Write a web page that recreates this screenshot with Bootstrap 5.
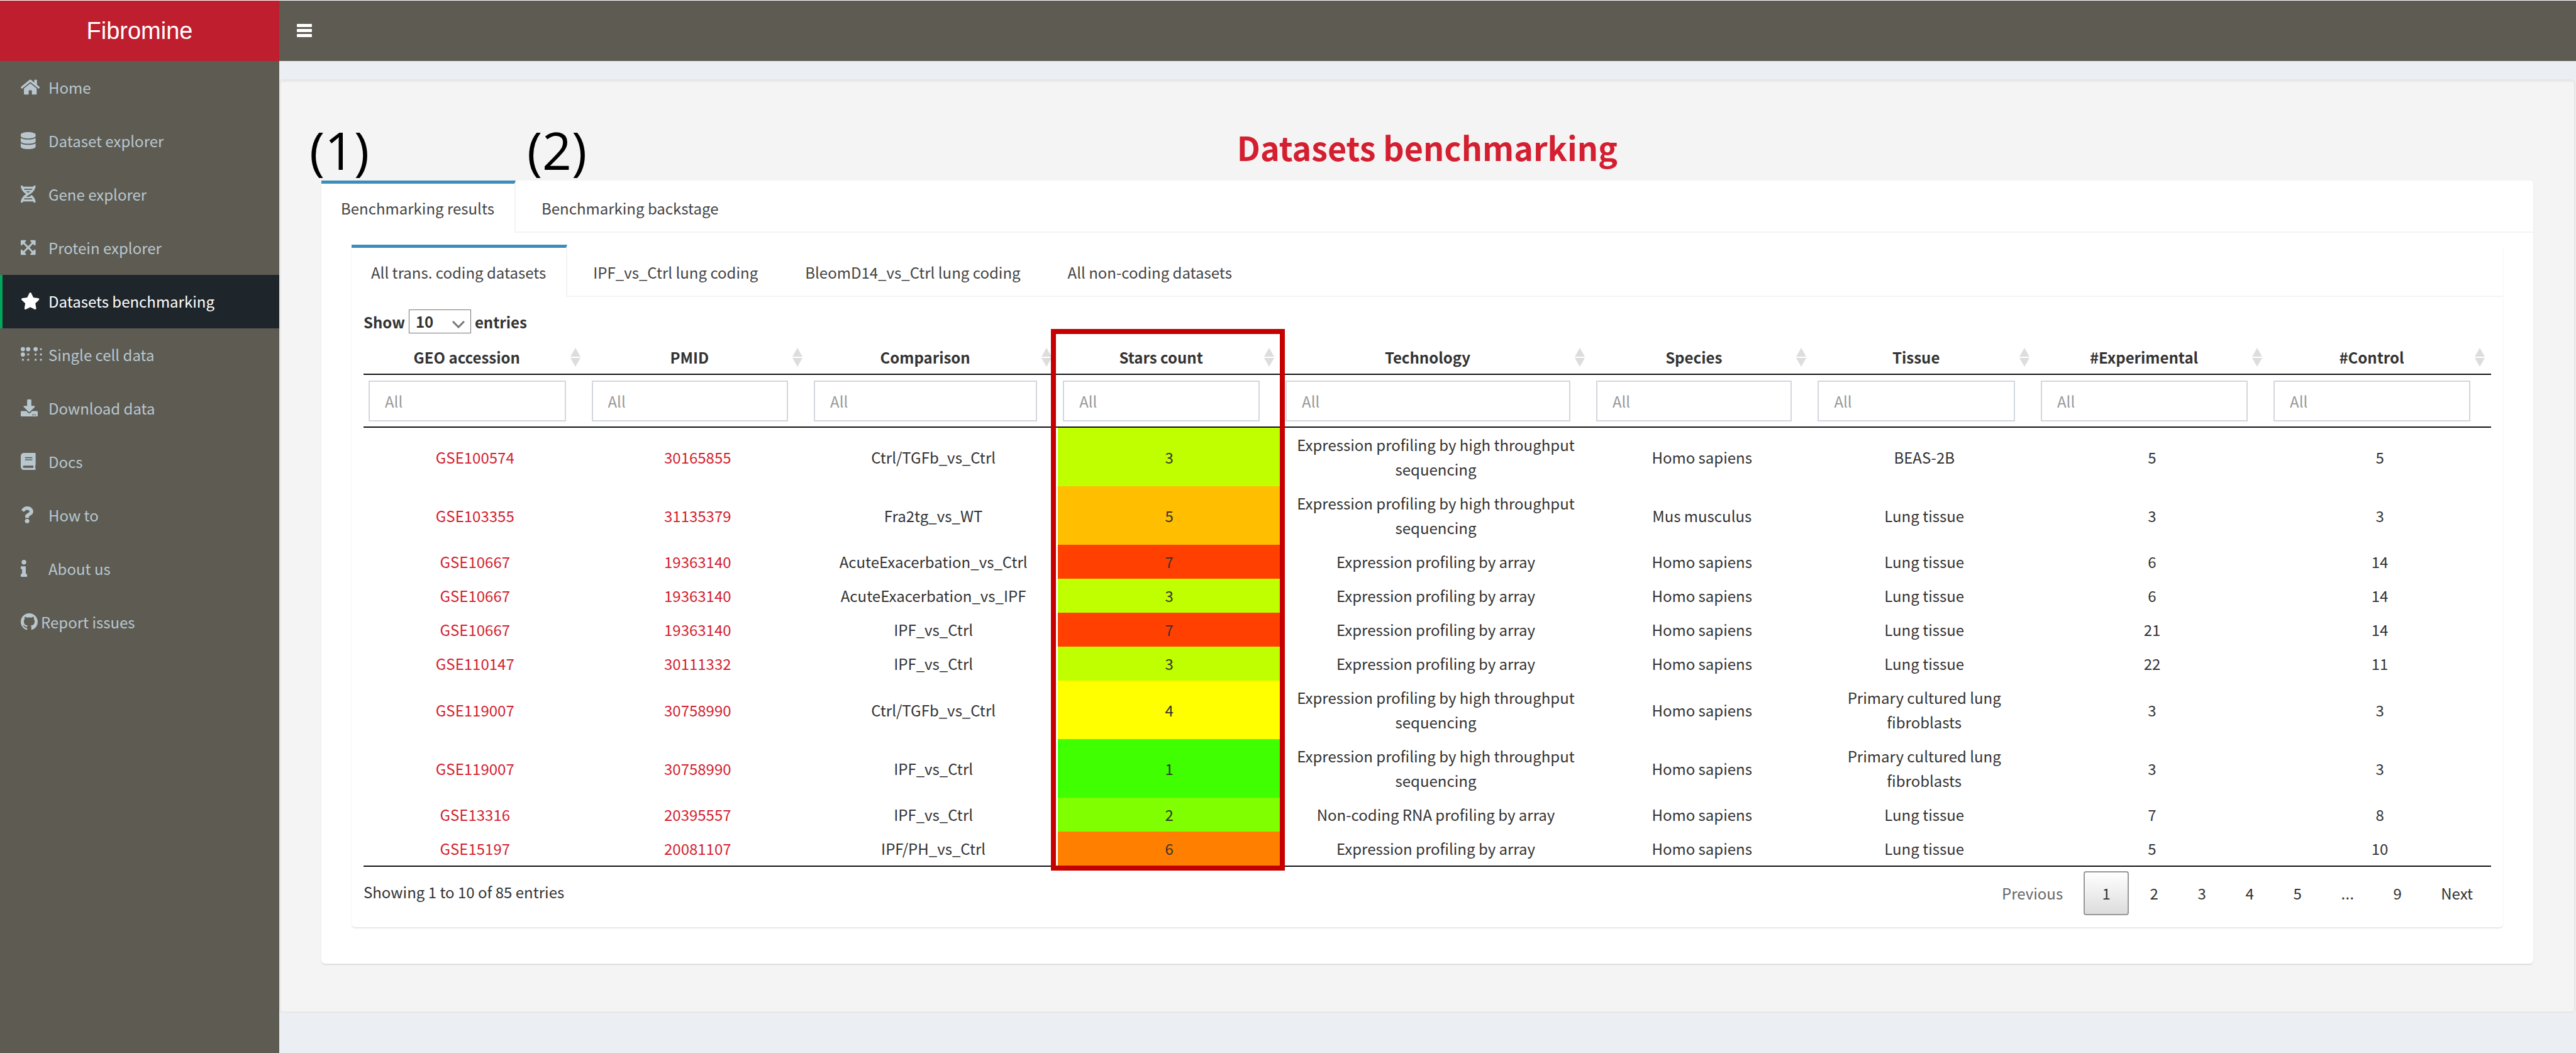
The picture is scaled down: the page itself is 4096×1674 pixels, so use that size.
<!DOCTYPE html>
<html lang="en">
<head>
<meta charset="utf-8">
<meta name="viewport" content="width=device-width, initial-scale=1">
<title>Fibromine - Datasets benchmarking</title>
<link href="https://cdn.jsdelivr.net/npm/bootstrap@5.3.0/dist/css/bootstrap.min.css" rel="stylesheet">
<style>
  body {
    font-family: "Noto Sans CJK SC", "Open Sans", sans-serif;
    font-size: 24px;
    line-height: 39px;
    color: #333;
    background: #ebeff4;
    border-top: 1px solid #fff;
  }
  a { text-decoration: none; }

  /* header */
  .brand-logo {
    width: 444px; height: 96px;
    background: #be1e2d; color: #fff;
    font: 38px/96px "Liberation Sans", Arial, sans-serif;
  }
  .brand-logo:hover { color: #fff; }
  .top-strip { background: #5e5b53; height: 96px; }
  .menu-toggle { background: none; border: 0; padding: 0 28px; height: 96px; color: #fff; }
  .menu-toggle svg { width: 24px; height: 24px; display: block; }

  /* sidebar */
  .side-menu { width: 444px; background: #5e5b53; }
  .shell { min-height: calc(100vh - 97px); }
  .side-link {
    height: 85px; padding: 0 0 2px 29px; color: #b8c7ce;
    border-left: 4px solid transparent;
  }
  .side-link:hover { color: #fff; }
  .side-link.current { color: #fff; background: #1e262c; border-left-color: #00a65a; }
  .side-icon { width: 44px; flex: none; line-height: 0; }
  .side-icon.tight { width: 32px; }
  .side-icon svg { height: 27px; fill: currentColor; }

  /* main area */
  .well-box {
    margin: 29px 1px 66px 0; padding: 37px 65px;
    background: #f4f4f4; border: 2px solid #e6e6e6; border-radius: 6px;
    box-shadow: inset 0 2px 2px rgba(0,0,0,.05);
  }
  .page-title { font-size: 52px; line-height: 63px; font-weight: 700; color: #d41f30; margin: 37px 0 22px; }

  .tab-box { background: #fff; box-shadow: 0 2px 2px rgba(0,0,0,.1); border-radius: 0 6px 6px 6px; margin-bottom: 39px; }
  .tab-row { border-bottom: 2px solid #f4f4f4; border-radius: 0; }
  .tab-row .nav-item { margin: 0 10px -2px 0; position: relative; }
  .tab-row .nav-link {
    border: 0; border-top: 5px solid transparent; border-radius: 0;
    border-right: 2px solid transparent; margin: 0;
    padding: 19px 32px 20px 31px; color: #444; line-height: 39px;
  }
  .tab-row .nav-link.active {
    color: #444; background: #fff;
    border-top-color: #3c8dbc; border-right-color: #f4f4f4;
  }
  .tab-body { padding: 19px; }
  .outer-body { padding: 19px 48px; }
  .callout-no {
    position: absolute; bottom: calc(100% + 4px); left: -19px;
    font: 82px/90px "Open Sans", sans-serif; color: #000; white-space: nowrap; pointer-events: none;
  }
  .callout-no.second { left: 8px; }

  .length-row { height: 40px; font-weight: 700; gap: 6px; }
  .length-row .form-select {
    width: 99px; height: 38px; padding: 0 0 0 10px;
    font: inherit; line-height: 34px; color: #333; border: 1px solid #767676; border-radius: 0;
    background: #fff url("data:image/svg+xml,%3Csvg xmlns='http://www.w3.org/2000/svg' viewBox='0 0 20 12'%3E%3Cpath d='M1 1l9 9 9-9' fill='none' stroke='%23777' stroke-width='3'/%3E%3C/svg%3E") no-repeat right 9px top 17px / 20px 12px;
  }

  /* data table */
  .bm-table { --bs-table-bg: transparent; color: #333; table-layout: fixed; border-collapse: separate; border-spacing: 0; text-align: center; vertical-align: middle; }
  .bm-table > thead > tr > th { padding: 17px 10px 7px 0; border-bottom: 2px solid #111; }
  .bm-table > thead > tr > td { padding: 9px 33px 8px 8px; border-bottom: 2px solid #111; }
  .bm-table > tbody { border: 0; }
  .bm-table > tbody > tr > td { padding: 7px 19px 8px; border: 0; }
  .bm-table > tbody > tr:last-child > td { border-bottom: 2px solid #111; }
  .bm-table a { color: #d41f30; }
  .bm-table .form-control {
    height: 65px; padding: 0 24px; font-size: 24px; line-height: 39px;
    border: 2px solid #d2d6de; border-radius: 0; box-shadow: none;
  }
  .bm-table .form-control::placeholder { color: #999; }
  .sort-mark { width: 16px; height: 30px; fill: #ddd; flex: none; }
  .bm-table .s1 { --bs-table-bg: #40ff00; }
  .bm-table .s2 { --bs-table-bg: #80ff00; }
  .bm-table .s3 { --bs-table-bg: #bfff00; }
  .bm-table .s4 { --bs-table-bg: #ffff00; }
  .bm-table .s5 { --bs-table-bg: #ffbf00; }
  .bm-table .s6 { --bs-table-bg: #ff8000; }
  .bm-table .s7 { --bs-table-bg: #ff4000; }
  .w-geo { width: 10.48%; } .w-pmid { width: 10.45%; } .w-comp { width: 11.71%; }
  .w-star { width: 10.46%; } .w-tech { width: 14.6%; } .w-spec { width: 10.42%; }
  .w-tiss { width: 10.48%; } .w-expr { width: 10.94%; } .w-ctrl { width: 10.46%; }

  /* frame drawn over the stars column */
  .stars-frame {
    position: absolute; top: -8px; bottom: -6px;
    left: calc(32.64% - 11px); width: calc(10.46% + 18px);
    border: 8px solid #c40000; pointer-events: none;
  }

  .info-text { padding-top: 20px; }
  .pager-row { padding-top: 7px; gap: 4px; }
  .pager-row .page-item .page-link.page-link {
    height: 70px; min-width: 72px; padding: 0 27px; line-height: 66px; font-size: 24px; text-align: center;
    border: 2px solid transparent; border-radius: 4px; background: none; color: #333; margin: 0;
  }
  .pager-row .page-item.disabled .page-link.page-link { color: #666; }
  .pager-row .page-item.active .page-link.page-link { border-color: #979797; background: linear-gradient(#fff, #dcdcdc); }
  .pager-row .dots { padding: 0 29px; line-height: 70px; font-family: "Open Sans", sans-serif; font-size: 27px; }
</style>
</head>
<body>

<svg class="d-none" aria-hidden="true">
  <symbol id="sort" viewBox="0 0 16 30"><path d="M8 0l8 14H0zM8 30l8-14H0z"/></symbol>
</svg>

<header class="d-flex">
  <a href="#" class="brand-logo text-center flex-shrink-0">Fibromine</a>
  <nav class="top-strip flex-grow-1">
    <button type="button" class="menu-toggle" aria-label="Toggle navigation">
      <svg viewBox="0 0 24 24" fill="currentColor"><rect y="1" width="24" height="5" rx="1"/><rect y="9" width="24" height="5" rx="1"/><rect y="17" width="24" height="5" rx="1"/></svg>
    </button>
  </nav>
</header>

<div class="d-flex shell">
  <aside class="side-menu flex-shrink-0">
    <nav class="d-flex flex-column">
      <a href="#" class="side-link d-flex align-items-center"><span class="side-icon"><svg viewBox="0 0 576 512"><path d="M280.37 148.26L96 300.11V464a16 16 0 0 0 16 16l112.06-.29a16 16 0 0 0 15.92-16V368a16 16 0 0 1 16-16h64a16 16 0 0 1 16 16v95.64a16 16 0 0 0 16 16.05L464 480a16 16 0 0 0 16-16V300L295.67 148.26a12.19 12.19 0 0 0-15.3 0zM571.6 251.47L488 182.56V44.05a12 12 0 0 0-12-12h-56a12 12 0 0 0-12 12v72.61L318.47 43a48 48 0 0 0-61 0L4.34 251.47a12 12 0 0 0-1.6 16.9l25.5 31A12 12 0 0 0 45.15 301l235.22-193.74a12.19 12.19 0 0 1 15.3 0L530.9 301a12 12 0 0 0 16.9-1.6l25.5-31a12 12 0 0 0-1.7-16.93z"/></svg></span>Home</a>
      <a href="#" class="side-link d-flex align-items-center"><span class="side-icon"><svg viewBox="0 0 448 512"><path d="M448 73.143v45.714C448 159.143 347.667 192 224 192S0 159.143 0 118.857V73.143C0 32.857 100.333 0 224 0s224 32.857 224 73.143zM448 176v102.857C448 319.143 347.667 352 224 352S0 319.143 0 278.857V176c48.125 33.143 136.208 48.572 224 48.572S399.874 209.143 448 176zm0 160v102.857C448 479.143 347.667 512 224 512S0 479.143 0 438.857V336c48.125 33.143 136.208 48.572 224 48.572S399.874 369.143 448 336z"/></svg></span>Dataset explorer</a>
      <a href="#" class="side-link d-flex align-items-center"><span class="side-icon"><svg viewBox="0 0 448 512"><path d="M.1 494.1c-1.1 9.5 6.3 17.8 15.9 17.8l32.3.1c8.1 0 14.9-5.9 16-13.9.7-4.9 1.8-11.1 3.4-18.1H380c1.6 6.9 2.9 13.2 3.5 18.1 1.1 8 7.9 14 16 13.9l32.3-.1c9.6 0 17.1-8.3 15.9-17.8-4.6-37.9-25.6-129-118.9-207.7-17.6 12.4-37.1 24.2-58.5 35.4 6.2 4.6 11.4 9.4 17 14.2H159.7c21.3-18.1 47-35.6 78.7-51.4C410.5 199.1 442.1 65.8 447.9 17.9 449 8.4 441.6.1 432 .1L399.6 0c-8.1 0-14.9 5.9-16 13.9-.7 4.9-1.8 11.1-3.4 18.1H67.8c-1.6-7-2.7-13.1-3.4-18.1-1.1-8-7.9-14-16-13.9L16.1.1C6.5.1-1 8.4.1 17.9 5.3 60.8 31.4 171.8 160 256 31.5 340.2 5.3 451.2.1 494.1zM224 219.6c-25.1-13.7-46.4-28.4-64.3-43.6h128.5c-17.8 15.2-39.1 30-64.2 43.6zM355.1 96c-5.8 10.4-12.8 21.1-21 32H114c-8.3-10.9-15.3-21.6-21-32h262.1zM92.9 416c5.8-10.4 12.8-21.1 21-32h219.4c8.3 10.9 15.4 21.6 21.2 32H92.9z"/></svg></span>Gene explorer</a>
      <a href="#" class="side-link d-flex align-items-center"><span class="side-icon"><svg viewBox="0 0 448 512"><path d="M448 344v112a23.94 23.94 0 0 1-24 24H312c-21.39 0-32.09-25.9-17-41l36.2-36.2L224 295.6 116.77 402.9 153 439c15.09 15.1 4.39 41-17 41H24a23.94 23.94 0 0 1-24-24V344c0-21.4 25.89-32.1 41-17l36.19 36.2L184.46 256 77.18 148.7 41 185c-15.1 15.1-41 4.4-41-17V56a23.94 23.94 0 0 1 24-24h112c21.39 0 32.09 25.9 17 41l-36.2 36.2L224 216.4l107.23-107.3L295 73c-15.09-15.1-4.39-41 17-41h112a23.94 23.94 0 0 1 24 24v112c0 21.4-25.89 32.1-41 17l-36.19-36.2L263.54 256l107.28 107.3L407 327.1c15.1-15.2 41-4.5 41 16.9z"/></svg></span>Protein explorer</a>
      <a href="#" class="side-link current d-flex align-items-center" aria-current="page"><span class="side-icon"><svg viewBox="0 0 576 512"><path d="M259.3 17.8L194 150.2 47.9 171.5c-26.2 3.8-36.7 36.1-17.7 54.6l105.7 103-25 145.5c-4.5 26.3 23.2 46 46.4 33.7L288 439.6l130.7 68.7c23.2 12.2 50.9-7.4 46.4-33.7l-25-145.5 105.7-103c19-18.5 8.5-50.8-17.7-54.6L382 150.2 316.7 17.8c-11.7-23.6-45.6-23.9-57.4 0z"/></svg></span>Datasets benchmarking</a>
      <a href="#" class="side-link d-flex align-items-center"><span class="side-icon"><svg viewBox="0 0 640 512"><circle cx="64" cy="96" r="64"/><circle cx="224" cy="96" r="64"/><circle cx="64" cy="256" r="64"/><circle cx="448" cy="96" r="64"/><circle cx="608" cy="96" r="32"/><circle cx="224" cy="256" r="32"/><circle cx="448" cy="256" r="32"/><circle cx="608" cy="256" r="32"/><circle cx="64" cy="416" r="32"/><circle cx="224" cy="416" r="32"/><circle cx="448" cy="416" r="32"/><circle cx="608" cy="416" r="32"/></svg></span>Single cell data</a>
      <a href="#" class="side-link d-flex align-items-center"><span class="side-icon"><svg viewBox="0 0 512 512"><path d="M216 0h80c13.3 0 24 10.7 24 24v168h87.7c17.8 0 26.7 21.5 14.1 34.1L269.7 378.3c-7.5 7.5-19.8 7.5-27.3 0L90.1 226.1c-12.6-12.6-3.7-34.1 14.1-34.1H192V24c0-13.3 10.7-24 24-24zm296 376v112c0 13.3-10.7 24-24 24H24c-13.3 0-24-10.7-24-24V376c0-13.3 10.7-24 24-24h146.7l49 49c20.1 20.1 52.5 20.1 72.6 0l49-49H488c13.3 0 24 10.7 24 24zm-124 88c0-11-9-20-20-20s-20 9-20 20 9 20 20 20 20-9 20-20zm64 0c0-11-9-20-20-20s-20 9-20 20 9 20 20 20 20-9 20-20z"/></svg></span>Download data</a>
      <a href="#" class="side-link d-flex align-items-center"><span class="side-icon"><svg viewBox="0 0 448 512"><path d="M448 360V24c0-13.3-10.7-24-24-24H96C43 0 0 43 0 96v320c0 53 43 96 96 96h328c13.3 0 24-10.7 24-24v-16c0-7.5-3.5-14.3-8.9-18.7-4.2-15.4-4.2-59.3 0-74.7 5.4-4.3 8.9-11.1 8.9-18.6zM128 134c0-3.3 2.7-6 6-6h212c3.3 0 6 2.7 6 6v20c0 3.3-2.7 6-6 6H134c-3.3 0-6-2.7-6-6v-20zm0 64c0-3.3 2.7-6 6-6h212c3.3 0 6 2.7 6 6v20c0 3.3-2.7 6-6 6H134c-3.3 0-6-2.7-6-6v-20zm253.4 250H96c-17.7 0-32-14.3-32-32 0-17.6 14.4-32 32-32h285.4c-1.9 17.1-1.9 46.9 0 64z"/></svg></span>Docs</a>
      <a href="#" class="side-link d-flex align-items-center"><span class="side-icon"><svg viewBox="0 0 384 512"><path d="M202.021 0C122.202 0 70.503 32.703 29.914 91.026c-7.363 10.58-5.093 25.086 5.178 32.874l43.138 32.709c10.373 7.865 25.132 6.026 33.253-4.148 25.049-31.381 43.63-49.449 82.757-49.449 30.764 0 68.816 19.799 68.816 49.631 0 22.552-18.617 34.134-48.993 51.164-35.423 19.86-82.299 44.576-82.299 106.405V320c0 13.255 10.745 24 24 24h72.471c13.255 0 24-10.745 24-24v-5.773c0-42.86 125.268-44.645 125.268-160.627C377.504 66.256 286.902 0 202.021 0zM192 373.459c-38.196 0-69.271 31.075-69.271 69.271 0 38.195 31.075 69.27 69.271 69.27s69.271-31.075 69.271-69.271-31.075-69.27-69.271-69.27z"/></svg></span>How to</a>
      <a href="#" class="side-link d-flex align-items-center"><span class="side-icon"><svg viewBox="0 0 192 512"><path d="M20 424.229h20V279.771H20c-11.046 0-20-8.954-20-20V212c0-11.046 8.954-20 20-20h112c11.046 0 20 8.954 20 20v212.229h20c11.046 0 20 8.954 20 20V492c0 11.046-8.954 20-20 20H20c-11.046 0-20-8.954-20-20v-47.771c0-11.046 8.954-20 20-20zM96 0C56.235 0 24 32.235 24 72s32.235 72 72 72 72-32.235 72-72S135.764 0 96 0z"/></svg></span>About us</a>
      <a href="#" class="side-link d-flex align-items-center"><span class="side-icon tight"><svg viewBox="0 0 16 16"><path d="M8 0C3.58 0 0 3.58 0 8c0 3.54 2.29 6.53 5.47 7.59.4.07.55-.17.55-.38 0-.19-.01-.82-.01-1.49-2.01.37-2.53-.49-2.69-.94-.09-.23-.48-.94-.82-1.13-.28-.15-.68-.52-.01-.53.63-.01 1.08.58 1.23.82.72 1.21 1.87.87 2.33.66.07-.52.28-.87.51-1.07-1.78-.2-3.64-.89-3.64-3.95 0-.87.31-1.59.82-2.15-.08-.2-.36-1.02.08-2.12 0 0 .67-.21 2.2.82.64-.18 1.32-.27 2-.27.68 0 1.36.09 2 .27 1.53-1.04 2.2-.82 2.2-.82.44 1.1.16 1.92.08 2.12.51.56.82 1.27.82 2.15 0 3.07-1.87 3.75-3.65 3.95.29.25.54.73.54 1.48 0 1.07-.01 1.93-.01 2.2 0 .21.15.46.55.38A8.013 8.013 0 0016 8c0-4.42-3.58-8-8-8z"/></svg></span>Report issues</a>
    </nav>
  </aside>

  <main class="flex-grow-1">
    <section class="well-box">
      <h1 class="page-title text-center">Datasets benchmarking</h1>

      <div class="tab-box">
        <ul class="nav nav-tabs tab-row">
          <li class="nav-item"><a class="nav-link active" href="#">Benchmarking results</a><span class="callout-no">(1)</span></li>
          <li class="nav-item"><a class="nav-link" href="#">Benchmarking backstage</a><span class="callout-no second">(2)</span></li>
        </ul>
        <div class="outer-body d-flow-root">
          <div class="tab-box">
            <ul class="nav nav-tabs tab-row">
              <li class="nav-item"><a class="nav-link active" href="#">All trans. coding datasets</a></li>
              <li class="nav-item"><a class="nav-link" href="#">IPF_vs_Ctrl lung coding</a></li>
              <li class="nav-item"><a class="nav-link" href="#">BleomD14_vs_Ctrl lung coding</a></li>
              <li class="nav-item"><a class="nav-link" href="#">All non-coding datasets</a></li>
            </ul>
            <div class="tab-body">
              <div class="length-row d-flex align-items-center">
                <label for="page-length">Show</label>
                <select id="page-length" class="form-select"><option>10</option><option>25</option><option>50</option><option>100</option></select>
                <label for="page-length">entries</label>
              </div>

              <div class="position-relative">
                <table class="table bm-table mb-0">
                  <colgroup>
                    <col class="w-geo"><col class="w-pmid"><col class="w-comp"><col class="w-star"><col class="w-tech"><col class="w-spec"><col class="w-tiss"><col class="w-expr"><col class="w-ctrl">
                  </colgroup>
                  <thead>
                    <tr>
                      <th scope="col"><div class="d-flex align-items-center"><span class="flex-grow-1">GEO accession</span><svg class="sort-mark"><use href="#sort"/></svg></div></th>
                      <th scope="col"><div class="d-flex align-items-center"><span class="flex-grow-1">PMID</span><svg class="sort-mark"><use href="#sort"/></svg></div></th>
                      <th scope="col"><div class="d-flex align-items-center"><span class="flex-grow-1">Comparison</span><svg class="sort-mark"><use href="#sort"/></svg></div></th>
                      <th scope="col"><div class="d-flex align-items-center"><span class="flex-grow-1">Stars count</span><svg class="sort-mark"><use href="#sort"/></svg></div></th>
                      <th scope="col"><div class="d-flex align-items-center"><span class="flex-grow-1">Technology</span><svg class="sort-mark"><use href="#sort"/></svg></div></th>
                      <th scope="col"><div class="d-flex align-items-center"><span class="flex-grow-1">Species</span><svg class="sort-mark"><use href="#sort"/></svg></div></th>
                      <th scope="col"><div class="d-flex align-items-center"><span class="flex-grow-1">Tissue</span><svg class="sort-mark"><use href="#sort"/></svg></div></th>
                      <th scope="col"><div class="d-flex align-items-center"><span class="flex-grow-1">#Experimental</span><svg class="sort-mark"><use href="#sort"/></svg></div></th>
                      <th scope="col"><div class="d-flex align-items-center"><span class="flex-grow-1">#Control</span><svg class="sort-mark"><use href="#sort"/></svg></div></th>
                    </tr>
                    <tr>
                      <td><input type="text" class="form-control" placeholder="All" aria-label="Filter GEO accession"></td>
                      <td><input type="text" class="form-control" placeholder="All" aria-label="Filter PMID"></td>
                      <td><input type="text" class="form-control" placeholder="All" aria-label="Filter comparison"></td>
                      <td><input type="text" class="form-control" placeholder="All" aria-label="Filter stars count"></td>
                      <td><input type="text" class="form-control" placeholder="All" aria-label="Filter technology"></td>
                      <td><input type="text" class="form-control" placeholder="All" aria-label="Filter species"></td>
                      <td><input type="text" class="form-control" placeholder="All" aria-label="Filter tissue"></td>
                      <td><input type="text" class="form-control" placeholder="All" aria-label="Filter experimental"></td>
                      <td><input type="text" class="form-control" placeholder="All" aria-label="Filter control"></td>
                    </tr>
                  </thead>
                  <tbody>
                    <tr><td><a href="#">GSE100574</a></td><td><a href="#">30165855</a></td><td>Ctrl/TGFb_vs_Ctrl</td><td class="s3">3</td><td>Expression profiling by high throughput sequencing</td><td>Homo sapiens</td><td>BEAS-2B</td><td>5</td><td>5</td></tr>
                    <tr><td><a href="#">GSE103355</a></td><td><a href="#">31135379</a></td><td>Fra2tg_vs_WT</td><td class="s5">5</td><td>Expression profiling by high throughput sequencing</td><td>Mus musculus</td><td>Lung tissue</td><td>3</td><td>3</td></tr>
                    <tr><td><a href="#">GSE10667</a></td><td><a href="#">19363140</a></td><td>AcuteExacerbation_vs_Ctrl</td><td class="s7">7</td><td>Expression profiling by array</td><td>Homo sapiens</td><td>Lung tissue</td><td>6</td><td>14</td></tr>
                    <tr><td><a href="#">GSE10667</a></td><td><a href="#">19363140</a></td><td>AcuteExacerbation_vs_IPF</td><td class="s3">3</td><td>Expression profiling by array</td><td>Homo sapiens</td><td>Lung tissue</td><td>6</td><td>14</td></tr>
                    <tr><td><a href="#">GSE10667</a></td><td><a href="#">19363140</a></td><td>IPF_vs_Ctrl</td><td class="s7">7</td><td>Expression profiling by array</td><td>Homo sapiens</td><td>Lung tissue</td><td>21</td><td>14</td></tr>
                    <tr><td><a href="#">GSE110147</a></td><td><a href="#">30111332</a></td><td>IPF_vs_Ctrl</td><td class="s3">3</td><td>Expression profiling by array</td><td>Homo sapiens</td><td>Lung tissue</td><td>22</td><td>11</td></tr>
                    <tr><td><a href="#">GSE119007</a></td><td><a href="#">30758990</a></td><td>Ctrl/TGFb_vs_Ctrl</td><td class="s4">4</td><td>Expression profiling by high throughput sequencing</td><td>Homo sapiens</td><td>Primary cultured lung fibroblasts</td><td>3</td><td>3</td></tr>
                    <tr><td><a href="#">GSE119007</a></td><td><a href="#">30758990</a></td><td>IPF_vs_Ctrl</td><td class="s1">1</td><td>Expression profiling by high throughput sequencing</td><td>Homo sapiens</td><td>Primary cultured lung fibroblasts</td><td>3</td><td>3</td></tr>
                    <tr><td><a href="#">GSE13316</a></td><td><a href="#">20395557</a></td><td>IPF_vs_Ctrl</td><td class="s2">2</td><td>Non-coding RNA profiling by array</td><td>Homo sapiens</td><td>Lung tissue</td><td>7</td><td>8</td></tr>
                    <tr><td><a href="#">GSE15197</a></td><td><a href="#">20081107</a></td><td>IPF/PH_vs_Ctrl</td><td class="s6">6</td><td>Expression profiling by array</td><td>Homo sapiens</td><td>Lung tissue</td><td>5</td><td>10</td></tr>
                  </tbody>
                </table>
                <div class="stars-frame"></div>
              </div>

              <div class="d-flex justify-content-between align-items-start">
                <div class="info-text">Showing 1 to 10 of 85 entries</div>
                <ul class="pagination pager-row mb-0">
                  <li class="page-item disabled"><a class="page-link" href="#">Previous</a></li>
                  <li class="page-item active"><a class="page-link" href="#">1</a></li>
                  <li class="page-item"><a class="page-link" href="#">2</a></li>
                  <li class="page-item"><a class="page-link" href="#">3</a></li>
                  <li class="page-item"><a class="page-link" href="#">4</a></li>
                  <li class="page-item"><a class="page-link" href="#">5</a></li>
                  <li class="dots">…</li>
                  <li class="page-item"><a class="page-link" href="#">9</a></li>
                  <li class="page-item"><a class="page-link" href="#">Next</a></li>
                </ul>
              </div>
            </div>
          </div>
        </div>
      </div>
    </section>
  </main>
</div>

<script src="https://cdn.jsdelivr.net/npm/bootstrap@5.3.0/dist/js/bootstrap.bundle.min.js"></script>
</body>
</html>
